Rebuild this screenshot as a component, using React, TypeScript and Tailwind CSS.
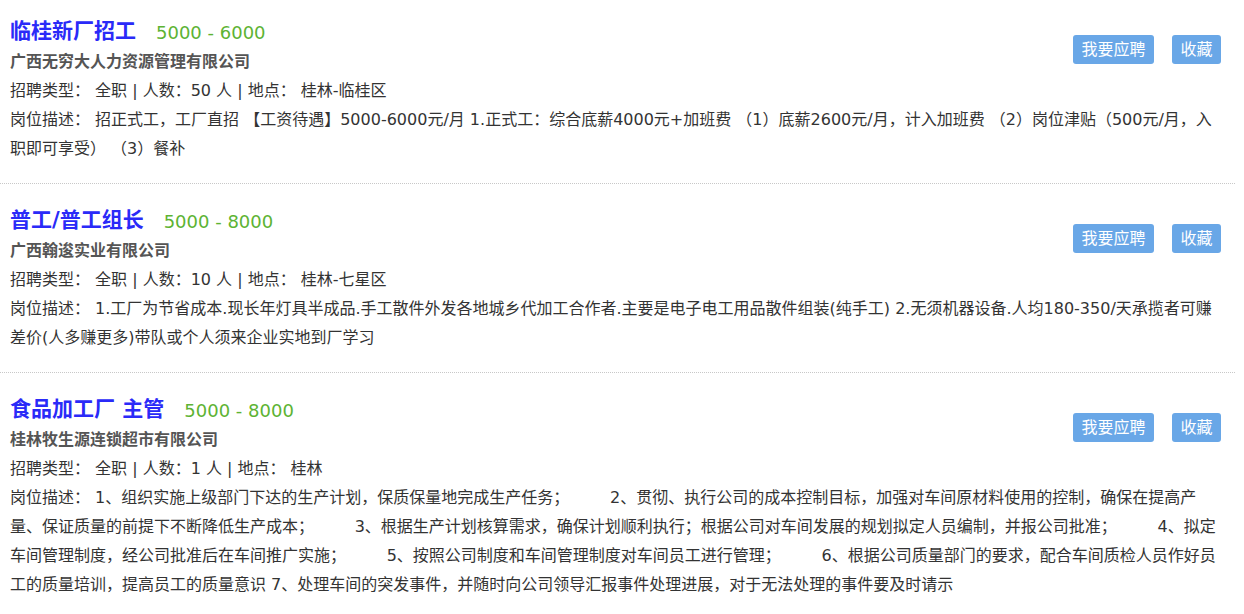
const S = "        ";

type Job = {
  title: string;
  salary: string;
  company: string;
  count: string;
  place: string;
  desc: string;
};

const jobs: Job[] = [
  {
    title: "临桂新厂招工",
    salary: "5000 - 6000",
    company: "广西无穷大人力资源管理有限公司",
    count: "50",
    place: "桂林-临桂区",
    desc: "招正式工，⼯⼚直招 【工资待遇】5000-6000元/月 1.正式工：综合底薪4000元+加班费 （1）底薪2600元/月，计入加班费 （2）岗位津贴（500元/月，入职即可享受） （3）餐补",
  },
  {
    title: "普工/普工组长",
    salary: "5000 - 8000",
    company: "广西翰逡实业有限公司",
    count: "10",
    place: "桂林-七星区",
    desc: "1.⼯⼚为节省成本.现长年灯具半成品.手工散件外发各地城乡代加工合作者.主要是电子电工用品散件组装(纯手工) 2.无须机器设备.人均180-350/天承揽者可赚差价(人多赚更多)带队或个人须来企业实地到厂学习",
  },
  {
    title: "食品加工厂 主管",
    salary: "5000 - 8000",
    company: "桂林牧生源连锁超市有限公司",
    count: "1",
    place: "桂林",
    desc:
      "1、组织实施上级部门下达的生产计划，保质保量地完成生产任务；" +
      S +
      "2、贯彻、执行公司的成本控制目标，加强对车间原材料使用的控制，确保在提高产量、保证质量的前提下不断降低生产成本；" +
      S +
      "3、根据生产计划核算需求，确保计划顺利执行；根据公司对车间发展的规划拟定人员编制，并报公司批准；" +
      S +
      "4、拟定车间管理制度，经公司批准后在车间推广实施；" +
      S +
      "5、按照公司制度和车间管理制度对车间员工进行管理；" +
      S +
      "6、根据公司质量部门的要求，配合车间质检人员作好员工的质量培训，提高员工的质量意识 7、处理车间的突发事件，并随时向公司领导汇报事件处理进展，对于无法处理的事件要及时请示",
  },
];

function JobItem({ job, first }: { job: Job; first: boolean }) {
  return (
    <div
      className={`border-b border-dotted border-[#c8c8c8] pl-[10px] pr-[14px] pb-[20px] ${
        first ? "pt-[17px]" : "pt-[22px]"
      }`}
    >
      {/* 按钮 */}
      <div className="float-right mt-[18px] flex gap-[18px]">
        <button className="h-[29px] w-[81px] rounded-[3px] bg-[#69a7e7] text-[16px] leading-[29px] text-white">
          我要应聘
        </button>
        <button className="h-[29px] w-[49px] rounded-[3px] bg-[#69a7e7] text-[16px] leading-[29px] text-white">
          收藏
        </button>
      </div>

      <div className="flex h-[30px] items-center">
        <span className="text-[21px] font-bold text-[#2a2af8]">{job.title}</span>
        <span className="ml-[20px] text-[18px] text-[#5db333]">{job.salary}</span>
      </div>
      <div className="text-[16px] font-bold leading-[29px] text-[#555]">{job.company}</div>
      <div className="whitespace-pre-wrap text-[16px] leading-[29px] text-[#333]">
        {`招聘类型： 全职 | 人数：${job.count} 人 | 地点： ${job.place}`}
      </div>
      <div className="whitespace-pre-wrap text-[16px] leading-[29px] text-[#333]">
        {`岗位描述： ${job.desc}`}
      </div>
    </div>
  );
}

export default function App() {
  return (
    <div
      className="min-h-screen w-full bg-white"
      style={{ fontFamily: '"DejaVu Sans", "Noto Sans CJK SC", sans-serif' }}
    >
      <div className="w-[1235px]">
        {jobs.map((job, i) => (
          <JobItem key={job.title} job={job} first={i === 0} />
        ))}
      </div>
    </div>
  );
}
